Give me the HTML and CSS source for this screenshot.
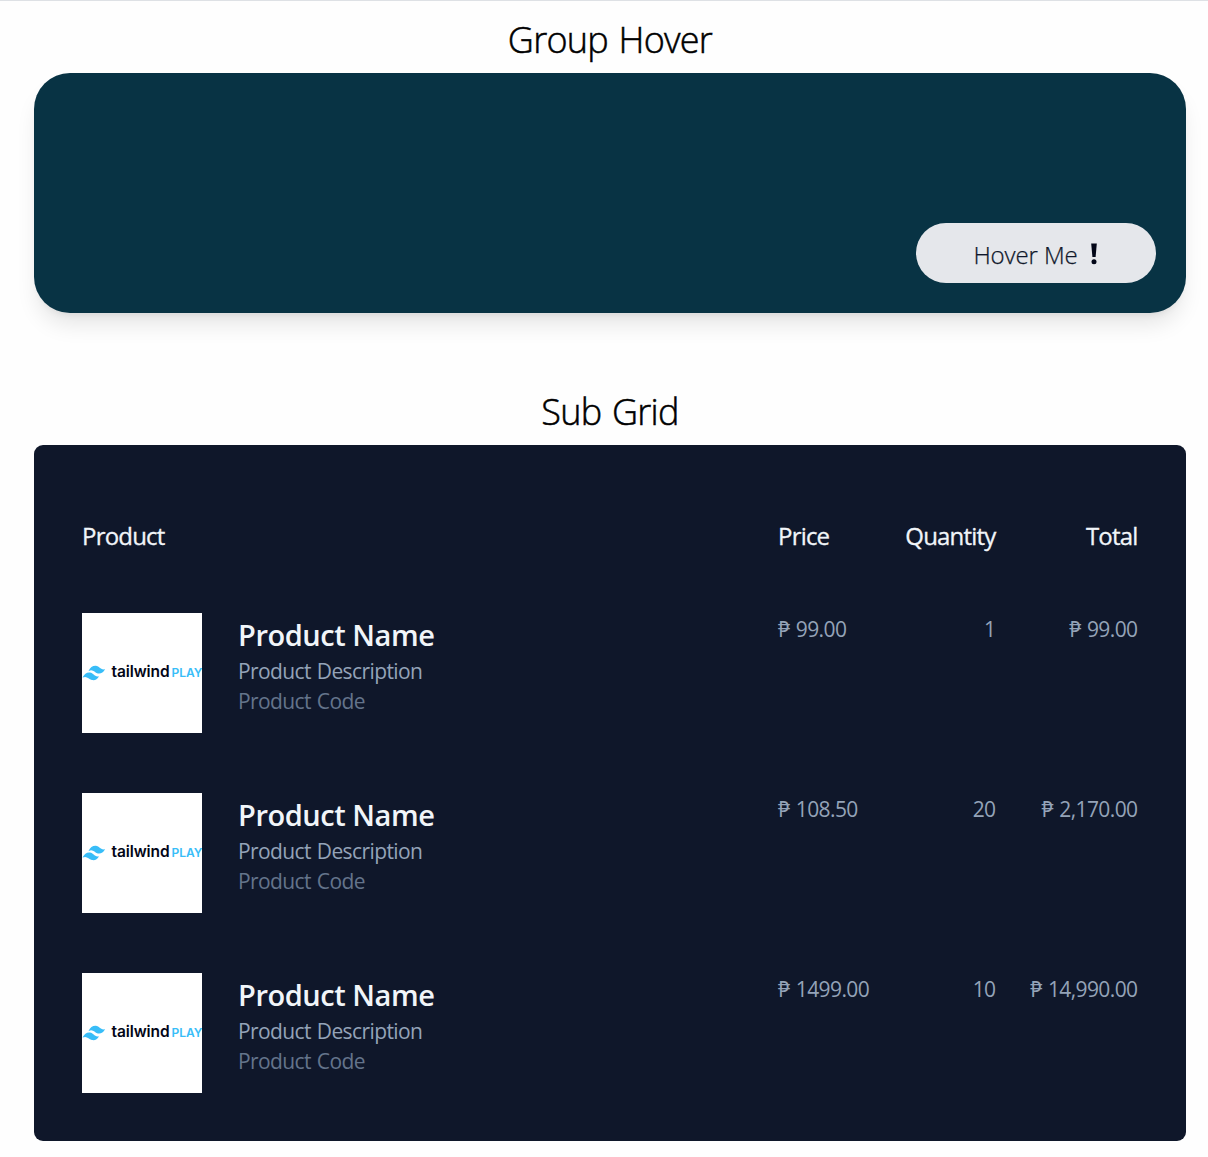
FILE: index.html
```html
<!DOCTYPE html>
<html lang="en">
<head>
<meta charset="utf-8">
<title>Tailwind Play</title>
<link rel="stylesheet" href="styles.css">
</head>
<body>
<svg class="defs" aria-hidden="true">
  <symbol id="logo" viewBox="0 0 120 120">
    <path fill="#38bdf8" d="M6.4 58.2C8.2 54.4 10.8 52.6 13.8 52.8C17.8 53.1 18.2 57.3 23 56.3C21.2 59.7 18.9 61 15.8 60.5C12.2 59.8 11.3 55.6 6.4 58.2ZM.5 64.6C2.3 61 4.9 59.2 7.9 59.6C11.8 60 12.3 64.4 17.1 63.3C15.2 66.6 12.9 67.7 9.9 67.1C6.3 66.3 5.4 62.5 .5 64.6Z"/>
    <text class="logo-word" x="29.6" y="64.2" textLength="58">tailwind</text>
    <text class="logo-play" x="89.4" y="64.2" textLength="31">PLAY</text>
  </symbol>
</svg>
<main class="page">
  <h1 class="title">Group Hover</h1>
  <section class="hover-card">
    <button class="hover-btn"><span class="hover-label">Hover Me</span>
      <svg class="bang" width="10" height="22" viewBox="0 0 10 22"><path d="M2.2 .5H7.8L6.6 14H3.4Z"/><circle cx="5" cy="18.8" r="2.5"/></svg>
    </button>
  </section>
  <h1 class="title title-second">Sub Grid</h1>
  <section class="products">
    <div class="row head"><span class="h-product">Product</span><span>Price</span><span class="end">Quantity</span><span class="end">Total</span></div>
    <div class="row item">
      <svg class="thumb"><use href="#logo"/></svg>
      <div class="info"><h2 class="name">Product Name</h2><p class="desc">Product Description</p><p class="code">Product Code</p></div>
      <span class="num">₱ 99.00</span><span class="num end">1</span><span class="num end">₱ 99.00</span>
    </div>
    <div class="row item">
      <svg class="thumb"><use href="#logo"/></svg>
      <div class="info"><h2 class="name">Product Name</h2><p class="desc">Product Description</p><p class="code">Product Code</p></div>
      <span class="num">₱ 108.50</span><span class="num end">20</span><span class="num end">₱ 2,170.00</span>
    </div>
    <div class="row item">
      <svg class="thumb"><use href="#logo"/></svg>
      <div class="info"><h2 class="name">Product Name</h2><p class="desc">Product Description</p><p class="code">Product Code</p></div>
      <span class="num">₱ 1499.00</span><span class="num end">10</span><span class="num end">₱ 14,990.00</span>
    </div>
  </section>
</main>
</body>
</html>
```
FILE: styles.css
```css
* { box-sizing: border-box; margin: 0; padding: 0; }
body {
  background: #fefefe;
  border-top: 1px solid #dee1e5;
  font-family: "Open Sans", "Noto Sans", sans-serif;
  color: #020617;
}
.defs { display: none; }
.page { padding: 12px 22px 16px 34px; }
.title {
  height: 60px;
  font-size: 36px;
  line-height: 53px;
  font-weight: 300;
  letter-spacing: -.75px;
  word-spacing: 2px;
  text-align: center;
  color: #000;
  -webkit-text-stroke: .5px #000;
}
.title-second { margin-top: 72px; }
.hover-card {
  height: 240px;
  padding: 30px;
  display: flex;
  justify-content: flex-end;
  align-items: flex-end;
  border-radius: 36px;
  background: #083344;
  box-shadow: 0 15px 22px -4px rgb(0 0 0 / .1), 0 6px 9px -6px rgb(0 0 0 / .1);
}
.hover-btn {
  width: 240px;
  height: 60px;
  padding-top: 2px;
  border: 0;
  border-radius: 30px;
  background: #e5e7eb;
  display: flex;
  align-items: center;
  justify-content: center;
  gap: 11px;
  font: 300 24px "Open Sans", "Noto Sans", sans-serif;
  letter-spacing: -.1px;
  color: #0f172a;
  -webkit-text-stroke: .25px #0f172a;
}
.bang { fill: #020617; }
.products {
  height: 696px;
  padding: 72px 48px 48px;
  display: flex;
  flex-direction: column;
  border-radius: 9px;
  background: #0f172a;
}
.row {
  display: grid;
  grid-template-columns: 120px 504px 90px 92px 106px;
  column-gap: 36px;
}
.head {
  height: 96px;
  font-size: 24px;
  line-height: 38px;
  font-weight: 400;
  letter-spacing: -.8px;
  color: #f1f5f9;
  -webkit-text-stroke: .3px #f1f5f9;
}
.h-product { grid-column: span 2; }
.item { height: 120px; margin-bottom: 60px; }
.item:last-child { margin-bottom: 0; }
.end { justify-self: end; margin-right: .5px; }
.thumb { width: 120px; height: 120px; background: #fff; }
.logo-word { font: 600 15.5px Inter, sans-serif; fill: #020617; }
.logo-play { font: 600 12px Inter, sans-serif; fill: #38bdf8; }
.info { padding-top: 1px; }
.name { font-size: 29px; line-height: 42px; font-weight: 600; letter-spacing: -.45px; color: #f1f5f9; }
.desc, .code, .num { font-size: 21px; line-height: 30px; white-space: nowrap; letter-spacing: -.6px; word-spacing: 1px; }
.desc { color: #94a3b8; }
.code { color: #64748b; }
.num { padding-top: 1px; color: #94a3b8; word-spacing: 1.5px; }
```
